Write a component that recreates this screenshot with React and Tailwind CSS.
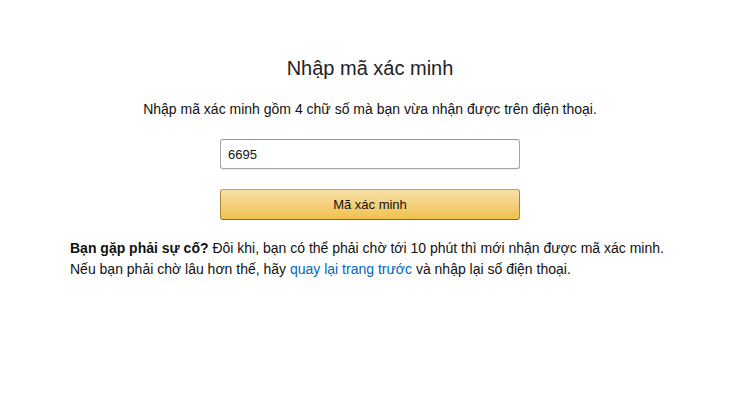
export default function App() {
  return (
    <div className="min-h-[412px] bg-white text-[#111] font-['Liberation_Sans',Arial,sans-serif]">
      <div className="mx-auto w-[600px] pt-[54px]">
        <h1 className="text-center text-[20px] leading-[28px] font-normal text-[#222]">Nhập mã xác minh</h1>
        <p className="mt-[17px] text-center text-[14px] leading-[20px] text-[#111]">
          Nhập mã xác minh gồm 4 chữ số mà bạn vừa nhận được trên điện thoại.
        </p>
        <div className="mx-auto mt-[20px] w-[300px]">
          <input
            type="text"
            defaultValue="6695"
            className="block h-[30px] w-full rounded-[3px] border border-[#a6a6a6] border-t-[#949494] px-[7px] text-[13px] text-[#111] outline-none shadow-[inset_0_1px_0_rgba(255,255,255,0.5),0_1px_0_rgba(0,0,0,0.07)] font-['Liberation_Sans',Arial,sans-serif]"
          />
          <button className="mt-[20px] block h-[31px] w-full rounded-[3px] border border-[#a88734] border-t-[#c5a34c] border-b-[#846a29] bg-gradient-to-b from-[#f7dfa5] to-[#f0c14b] text-[13px] text-[#111] font-['Liberation_Sans',Arial,sans-serif]">
            Mã xác minh
          </button>
        </div>
        <p className="mt-[18px] text-[14px] leading-[21px] text-[#111]">
          <b className="font-bold">Bạn gặp phải sự cố?</b> Đôi khi, bạn có thể phải chờ tới 10 phút thì mới nhận được mã xác minh.
          <br />
          Nếu bạn phải chờ lâu hơn thế, hãy <a className="text-[#0066c0]">quay lại trang trước</a> và nhập lại số điện thoại.
        </p>
      </div>
    </div>
  );
}
